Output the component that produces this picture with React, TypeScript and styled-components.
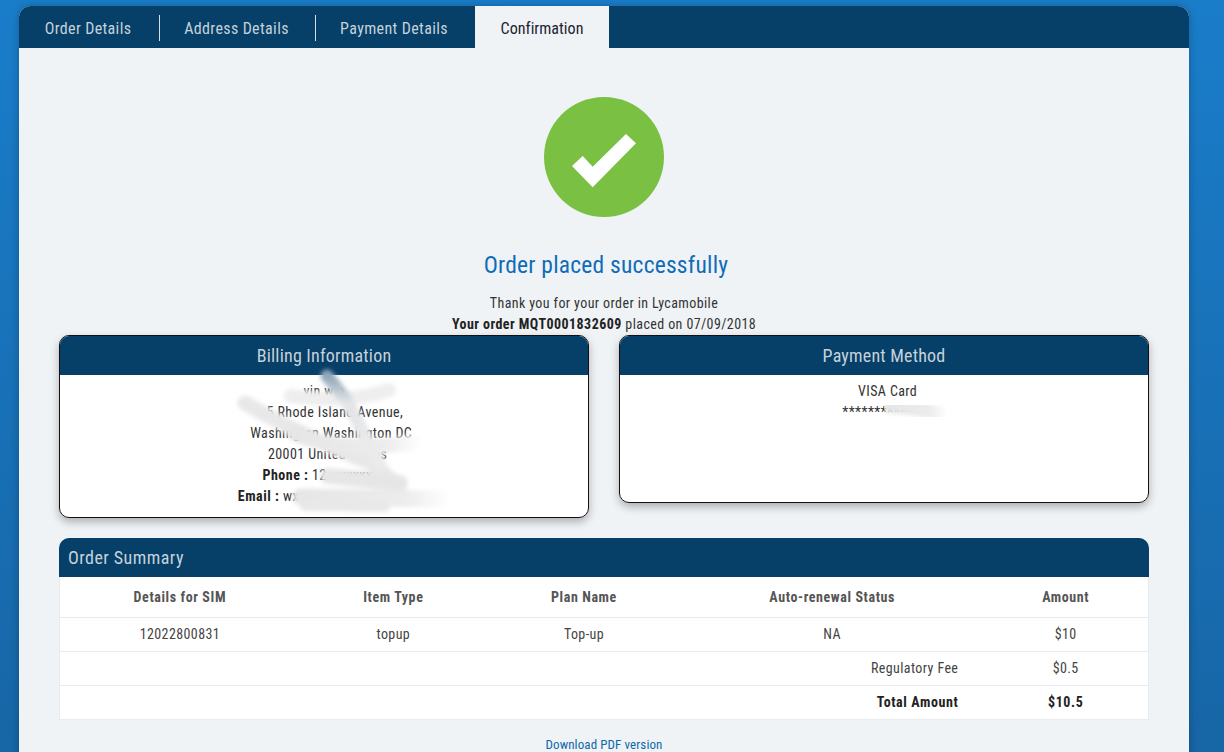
import styled, { createGlobalStyle } from 'styled-components';

const GlobalStyle = createGlobalStyle`
  html, body {
    margin: 0;
    height: 752px;
    overflow: hidden;
  }
  * {
    box-sizing: border-box;
  }
  body {
    font-family: "Roboto Condensed", Roboto, "Liberation Sans", sans-serif;
    font-stretch: condensed;
    background: linear-gradient(180deg, #1a7dca 0%, #1766a6 100%);
  }
`;

const Page = styled.div`
  width: 1224px;
  height: 752px;
  padding: 6px 35px 0 19px;
  overflow: hidden;
`;

const Panel = styled.div`
  width: 1170px;
  height: 900px;
  background: #f0f3f6;
  border-radius: 12px 12px 0 0;
  box-shadow: 0 0 8px rgba(0, 0, 0, 0.25);
  overflow: hidden;
`;

const TabBar = styled.div`
  display: flex;
  height: 42px;
  background: #063f67;
`;

const Tab = styled.div<{ $active?: boolean; $width: number; $divider?: boolean }>`
  position: relative;
  width: ${(p) => p.$width}px;
  padding: ${(p) => (p.$active ? '2px 0 0' : '3px 3px 0 0')};
  display: flex;
  align-items: center;
  justify-content: center;
  font-size: 16px;
  letter-spacing: ${(p) => (p.$active ? '0.05px' : '0.36px')};
  color: ${(p) => (p.$active ? '#1c2530' : '#c5d2db')};
  background: ${(p) => (p.$active ? '#f0f3f6' : 'transparent')};
  ${(p) => p.$divider && `
    &::after {
      content: '';
      position: absolute;
      right: 0;
      top: 9px;
      height: 26px;
      width: 1px;
      background: #d5dfe6;
    }
  `}
`;

const Content = styled.div`
  display: flex;
  flex-direction: column;
  align-items: center;
  padding: 49px 40px 0;
`;

const SuccessIcon = styled.svg`
  display: block;
  width: 120px;
  height: 120px;
`;

const Heading = styled.h2`
  margin: 33px 0 0;
  padding-left: 4px;
  height: 30px;
  line-height: 30px;
  font-size: 23.5px;
  font-weight: 400;
  letter-spacing: 0.22px;
  color: #0f6cb6;
`;

const Note = styled.p`
  margin: 13px 0 0;
  line-height: 21px;
  font-size: 14px;
  letter-spacing: 0.4px;
  text-align: center;
  color: #333;

  & + & {
    margin-top: 0;
  }

  b {
    color: #222;
    letter-spacing: 0.45px;
  }
`;

const CardRow = styled.div`
  width: 100%;
  display: grid;
  grid-template-columns: 530px 530px;
  justify-content: space-between;
  align-items: start;
`;

const Card = styled.section<{ $height: number }>`
  position: relative;
  height: ${(p) => p.$height}px;
  background: #fff;
  border: 1px solid #111;
  border-radius: 10px;
  overflow: hidden;
`;

const CardShadow = styled.div`
  border-radius: 10px;
  box-shadow: 0 4px 8px rgba(0, 0, 0, 0.28);
`;

const CardTitle = styled.h3`
  margin: 0;
  height: 39px;
  line-height: 40px;
  background: #063f67;
  color: #c5d2db;
  font-size: 18px;
  font-weight: 400;
  letter-spacing: 0.2px;
  text-align: center;
`;

const CardBody = styled.div`
  padding-top: 5.5px;
  text-align: center;
  font-size: 14px;
  line-height: 21px;
  letter-spacing: 0.4px;
  color: #333;

  b {
    color: #222;
    letter-spacing: 0.5px;
  }
`;

const Smear = styled.svg`
  position: absolute;
  left: 0;
  top: 0;
  width: 530px;
  height: 183px;
  pointer-events: none;
`;

const SummaryTitle = styled.h3`
  width: 100%;
  margin: 20px 0 0;
  height: 39px;
  padding-left: 9px;
  line-height: 39px;
  background: #063f67;
  color: #c5d2db;
  border-radius: 10px 10px 0 0;
  font-size: 18px;
  font-weight: 400;
  letter-spacing: 0.45px;
`;

const SummaryTable = styled.table`
  width: 100%;
  table-layout: fixed;
  border-collapse: collapse;
  background: #fff;
  border: 1px solid #e9ecef;
  border-top: 0;
  font-size: 14px;
  color: #333;
`;

const HeadCell = styled.th`
  height: 40px;
  padding: 0;
  font-weight: 700;
  letter-spacing: 0.6px;
  text-align: center;
  color: #555;
  border-bottom: 1px solid #e6e9ed;
`;

const Cell = styled.td<{ $right?: boolean; $bold?: boolean }>`
  height: 34px;
  padding: 0 ${(p) => (p.$right ? '25px' : '0')} 0 0;
  text-align: ${(p) => (p.$right ? 'right' : 'center')};
  font-weight: ${(p) => (p.$bold ? 700 : 400)};
  letter-spacing: ${(p) => (p.$bold ? '0.6px' : '0.4px')};
  color: ${(p) => (p.$bold ? '#222' : '#444')};
  border-bottom: 1px solid #e6e9ed;
  tr:last-child & {
    border-bottom: 0;
  }
`;

const PdfLink = styled.a`
  margin-top: 17px;
  font-size: 13px;
  letter-spacing: 0.1px;
  color: #0d6aa8;
  text-decoration: none;
`;

const columns = [240, 187, 194, 302, 165];
const headers = ['Details for SIM', 'Item Type', 'Plan Name', 'Auto-renewal Status', 'Amount'];

export default function App() {
  return (
    <Page>
      <GlobalStyle />
      <Panel>
        <TabBar>
          <Tab $width={141} $divider>Order Details</Tab>
          <Tab $width={156} $divider>Address Details</Tab>
          <Tab $width={159}>Payment Details</Tab>
          <Tab $width={134} $active>Confirmation</Tab>
        </TabBar>
        <Content>
          <SuccessIcon viewBox="0 0 120 120">
            <circle cx="60" cy="60" r="60" fill="#7ac143" />
            <polygon points="28,69 38.7,59 48.7,69.7 82,37 92,46.3 48.7,90.3" fill="#fff" />
          </SuccessIcon>
          <Heading>Order placed successfully</Heading>
          <Note>Thank you for your order in Lycamobile</Note>
          <Note><b>Your order MQT0001832609</b> placed on 07/09/2018</Note>
          <CardRow>
            <CardShadow>
              <Card $height={183}>
                <CardTitle>Billing Information</CardTitle>
                <CardBody>
                  <div>vin w a</div>
                  <div>{'\u00a0\u00a0\u00a0\u00a0\u00a0\u00a0'}5 Rhode Island Avenue,</div>
                  <div>{'\u00a0\u00a0\u00a0\u00a0'}Washington Washington DC</div>
                  <div>{'\u00a0\u00a0'}20001 United States</div>
                  <div><b>Phone :</b> 12xxxxxxxxx</div>
                  <div><b>Email :</b> wxxxxxxxxxxxxxxxxxx</div>
                </CardBody>
                <Smear viewBox="0 0 530 183">
                  <defs>
                    <filter id="soft"><feGaussianBlur stdDeviation="2" /></filter>
                    <linearGradient id="fadeRight" x1="0" x2="1" y1="0" y2="0">
                      <stop offset="0" stopColor="#e6e6e6" />
                      <stop offset="0.7" stopColor="#ececec" />
                      <stop offset="1" stopColor="#fff" />
                    </linearGradient>
                    <linearGradient id="fadeDown" x1="0" x2="0" y1="0" y2="1">
                      <stop offset="0" stopColor="#8fa6b8" />
                      <stop offset="0.3" stopColor="#e2e5e8" />
                      <stop offset="1" stopColor="#ebebeb" />
                    </linearGradient>
                  </defs>
                  <g fill="none" strokeLinecap="round" filter="url(#soft)">
                    <path d="M231 60 Q288 68 329 54" stroke="#eeeeee" strokeWidth="14" />
                    <path d="M185 67 Q238 98 313 128 L338 150" stroke="#e8e8e8" strokeWidth="15" />
                    <path d="M267 40 L285 62 L320 128" stroke="url(#fadeDown)" strokeWidth="13" />
                    <path d="M235 98 Q285 118 363 105" stroke="url(#fadeRight)" strokeWidth="15" />
                    <path d="M268 140 L340 147" stroke="#e6e6e6" strokeWidth="16" />
                    <path d="M241 161 L390 163" stroke="url(#fadeRight)" strokeWidth="17" />
                    <path d="M245 170 L325 171" stroke="#e8e8e8" strokeWidth="10" />
                  </g>
                </Smear>
              </Card>
            </CardShadow>
            <CardShadow>
              <Card $height={168}>
                <CardTitle>Payment Method</CardTitle>
                <CardBody>
                  <div>{'\u00a0\u00a0'}VISA Card</div>
                  <div>*************</div>
                </CardBody>
                <Smear viewBox="0 0 530 183">
                  <path d="M270 70 Q295 70 327 80" fill="none" stroke="url(#fadeRight)" strokeWidth="15" strokeLinecap="round" filter="url(#soft)" />
                </Smear>
              </Card>
            </CardShadow>
          </CardRow>
          <SummaryTitle>Order Summary</SummaryTitle>
          <SummaryTable>
            <colgroup>
              {columns.map((w) => <col key={w} style={{ width: w }} />)}
            </colgroup>
            <thead>
              <tr>
                {headers.map((h) => <HeadCell key={h}>{h}</HeadCell>)}
              </tr>
            </thead>
            <tbody>
              <tr>
                <Cell>12022800831</Cell>
                <Cell>topup</Cell>
                <Cell>Top-up</Cell>
                <Cell>NA</Cell>
                <Cell>$10</Cell>
              </tr>
              <tr>
                <Cell colSpan={4} $right>Regulatory Fee</Cell>
                <Cell>$0.5</Cell>
              </tr>
              <tr>
                <Cell colSpan={4} $right $bold>Total Amount</Cell>
                <Cell $bold>$10.5</Cell>
              </tr>
            </tbody>
          </SummaryTable>
          <PdfLink href="#">Download PDF version</PdfLink>
        </Content>
      </Panel>
    </Page>
  );
}
